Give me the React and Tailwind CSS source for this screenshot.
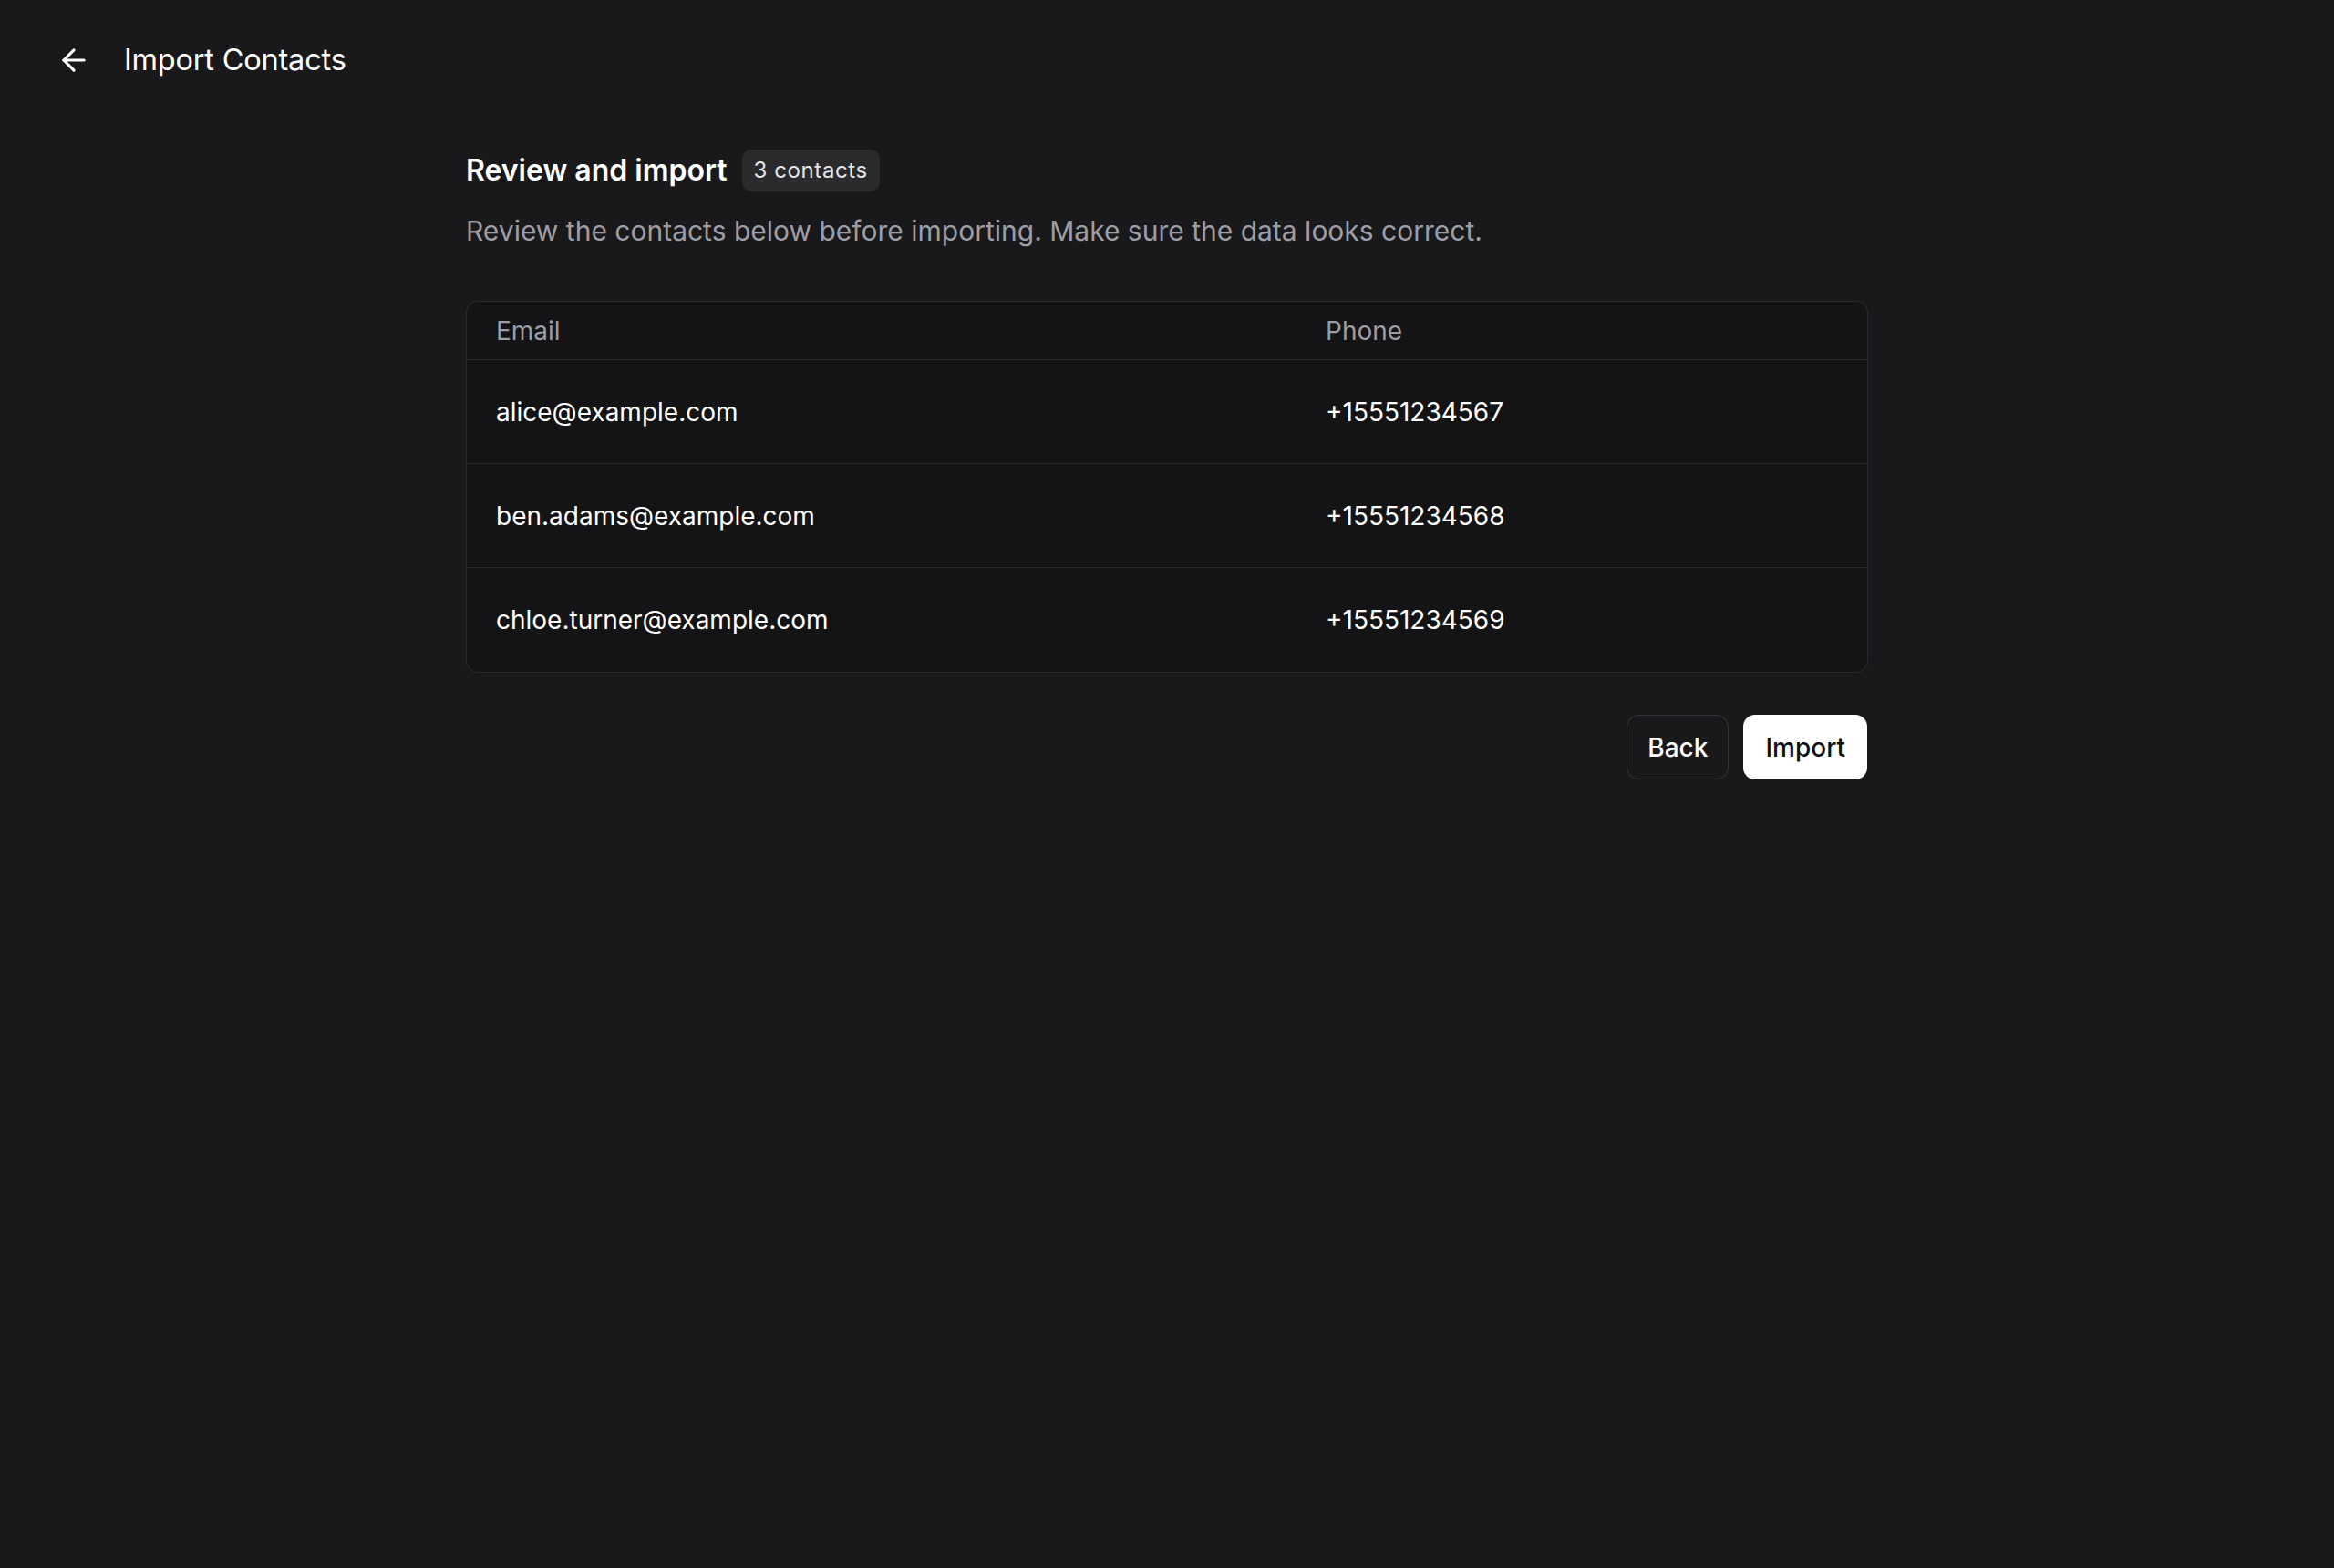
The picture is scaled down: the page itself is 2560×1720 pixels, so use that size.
import React from "react";

const contacts = [
  { email: "alice@example.com", phone: "+15551234567" },
  { email: "ben.adams@example.com", phone: "+15551234568" },
  { email: "chloe.turner@example.com", phone: "+15551234569" },
];

function ArrowLeftIcon() {
  return (
    <svg
      width="38"
      height="38"
      viewBox="0 0 24 24"
      fill="none"
      stroke="currentColor"
      strokeWidth="2"
      strokeLinecap="round"
      strokeLinejoin="round"
    >
      <path d="m12 19-7-7 7-7" />
      <path d="M19 12H5" />
    </svg>
  );
}

export default function App() {
  return (
    <div
      className="min-h-screen w-full bg-[#19191b] text-white"
      style={{ fontFamily: "Inter, 'Noto Sans', sans-serif" }}
    >
      <header className="flex h-[132px] items-center pl-[62px]">
        <button className="flex items-center text-white">
          <ArrowLeftIcon />
        </button>
        <h1 className="ml-[36px] text-[32.5px] font-normal leading-none tracking-[-0.2px]">
          Import Contacts
        </h1>
      </header>

      <main className="mx-auto w-[1538px] pt-[32px]">
        <div className="flex items-center gap-[16px]">
          <h2 className="text-[32px] font-semibold leading-none">Review and import</h2>
          <span className="flex h-[46px] items-center rounded-[10px] bg-[#2a2a2d] px-[13px] text-[24px] leading-none tracking-[0.6px] text-[#e4e4e7]">
            3 contacts
          </span>
        </div>

        <p className="mt-[23px] text-[30px] leading-[40px] text-[#9d9da6]">
          Review the contacts below before importing. Make sure the data looks correct.
        </p>

        <div className="mt-[57px] overflow-hidden rounded-[13px] border border-[#2c2c30] bg-[#141416]">
          <div className="grid h-[64px] grid-cols-[910px_1fr] items-center border-b border-[#2c2c30] text-[28px] text-[#9d9da6]">
            <div className="pl-[32px]">Email</div>
            <div className="pl-[32px]">Phone</div>
          </div>
          {contacts.map((c, i) => (
            <div
              key={c.email}
              className={
                "grid h-[114px] grid-cols-[910px_1fr] items-center text-[28px] text-white " +
                (i < contacts.length - 1 ? "border-b border-[#2c2c30]" : "")
              }
            >
              <div className="pl-[32px]">{c.email}</div>
              <div className="pl-[32px]">{c.phone}</div>
            </div>
          ))}
        </div>

        <div className="mt-[46px] flex justify-end gap-[16px] pr-[1px]">
          <button className="h-[71px] rounded-[13px] border border-[#333337] bg-[#19191b] px-[22px] text-[28px] font-medium text-white">
            Back
          </button>
          <button className="h-[71px] rounded-[13px] bg-white px-[24px] text-[28px] font-medium text-[#111113]">
            Import
          </button>
        </div>
      </main>
    </div>
  );
}
